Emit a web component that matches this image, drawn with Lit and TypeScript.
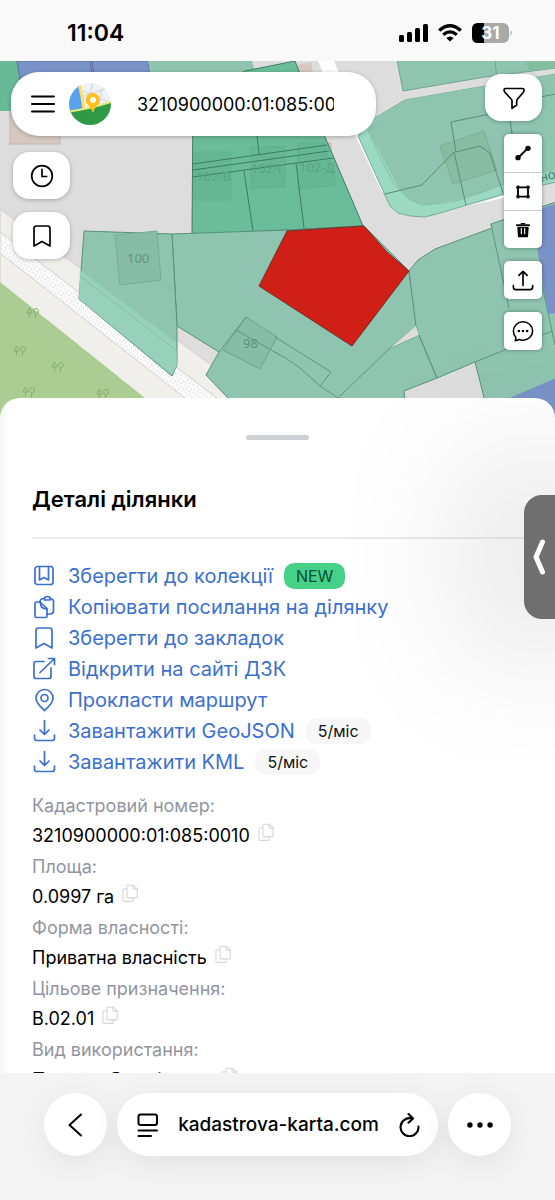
import { LitElement, html, css, svg, nothing } from "lit";
import { customElement } from "lit/decorators.js";

const icon = (body: unknown, cls: string, box = "0 0 24 24") => html`
  <svg class=${cls} viewBox=${box} fill="none" stroke="currentColor" stroke-linecap="round" stroke-linejoin="round" aria-hidden="true">${body}</svg>`;

const glyphs = {
  menu: svg`<g stroke-width="2"><path d="M1 4.500h22M1 12h22M1 19.500h22"/></g>`,
  clock: svg`<g stroke-width="1.700"><circle cx="12" cy="12" r="10.300"/><path d="M12 5.500V12.500h4.500" stroke-linecap="square" stroke-linejoin="miter"/></g>`,
  bookmark: svg`<path stroke-width="1.700" d="M4 22V4.500Q4 2 6.500 2h11Q20 2 20 4.500V22l-8-4.500z"/>`,
  filter: svg`<path stroke-width="1.700" d="M3.500 2.500h17q1.500 0 1.500 1.500 0 1.800-1.200 3L15.500 13q-.8.900-.8 2v4L10 22.300V15q0-1.100-.8-2L3.500 7Q2 5.500 2 4q0-1.500 1.500-1.500z"/>`,
  line: svg`<path stroke-width="3" d="M5 19L19 5"/><circle cx="4.500" cy="19" r="4" stroke="none" fill="currentColor"/><circle cx="19.500" cy="5" r="4" stroke="none" fill="currentColor"/>`,
  area: svg`<path stroke-width="2.800" d="M4.500 5h15v14h-15z"/><g fill="currentColor"><circle cx="4.500" cy="5" r="2.200"/><circle cx="19.500" cy="5" r="2.200"/><circle cx="4.500" cy="19" r="2.200"/><circle cx="19.500" cy="19" r="2.200"/></g>`,
  trash: svg`<path stroke-width="3" d="M3 5h18"/><path stroke-width="2" d="M9.500 2.500h5"/><path fill="currentColor" stroke-width="2" d="M4.500 8.500h15l-1 13.500h-13z"/><path stroke="#fff" stroke-width="1.700" d="M9.500 9.500v8M14.500 9.500v8"/>`,
  upload: svg`<g stroke-width="1.800"><path d="M12 18V2.500M7.500 7L12 2.500 16.500 7"/><path d="M1.500 18v1.500q0 3 3 3h15q3 0 3-3V18"/></g>`,
  chat: svg`<path stroke-width="1.700" d="M3.500 22.500c1-1.500 1-2.500.6-3.600C2.600 17.200 1.500 14.800 1.500 12 1.500 6.500 6.200 2 12 2s10.500 4.500 10.500 10-4.700 10-10.500 10c-1.500 0-3-.3-4.200-.8-1.200.8-2.600 1.300-4.300 1.300z"/><g fill="currentColor" stroke-width="0"><circle cx="7.500" cy="12" r="1.400"/><circle cx="12" cy="12" r="1.400"/><circle cx="16.500" cy="12" r="1.400"/></g>`,
  collection: svg`<g stroke-width="1.700"><rect x="3" y="2.500" width="18" height="18" rx="2.500"/><path d="M7.500 2.500v13.500l4.500-2.500 4.500 2.500v-13.500"/></g>`,
  clipboard: svg`<g stroke-width="1.700"><path d="M9 22.500H4.500Q3 22.500 3 21V8.500Q3 7 4.500 7H8l7 6.500V21q0 1.500-1.500 1.500z"/><path d="M8 7q.5 1 1 3.500Q9.500 13 12 13.300q2 .2 3 1"/><path d="M8 7Q8 4 11 3.500h1.500M18 3.500q3.500.3 3.500 3V16q0 3-3.500 3h-3"/><path d="M12.500 2.500q2.700-2 5.500 0v2.500h-5.500z"/></g>`,
  external: svg`<g stroke-width="1.700"><path d="M12 4.500H4Q2 4.500 2 6.500v13q0 2 2 2h13q2 0 2-2V11"/><path d="M8 15.500L22.500 1.500M16.500 1.500h6v6"/></g>`,
  pin: svg`<g stroke-width="1.700"><path d="M12.500 22.500C9 19.500 4 15 4 10a8.500 8.500 0 0 1 17 0c0 5-5 9.500-8.500 12.500z"/><circle cx="12.500" cy="10" r="3.500"/></g>`,
  download: svg`<g stroke-width="1.700"><path d="M12.500 1.500v14M8 11l4.500 4.500L17 11"/><path d="M2.500 16v3q0 2.500 2.500 2.500h15q2.500 0 2.500-2.500v-3"/></g>`,
  back: svg`<path stroke-width="2" d="M17 1.500L5.500 12l11.500 10.500"/>`,
  page: svg`<g stroke-width="2"><rect x="2.500" y="1.500" width="18.500" height="10.500" rx="2"/><path d="M2.500 17.500h18.500M2.500 23h12.500"/></g>`,
  reload: svg`<g stroke-width="2.100"><path d="M14 5.300A9 9 0 1 0 21.500 13.500"/><path d="M11.500 1l4.500 4.500-4.500 4.200"/></g>`,
  more: svg`<g fill="currentColor" stroke="none"><circle cx="2.700" cy="12" r="2.500"/><circle cx="12" cy="12" r="2.500"/><circle cx="21.300" cy="12" r="2.500"/></g>`,
  copy: svg`<g stroke-width="1.400"><path d="M9 1.500h6.500l5 4.500v10q0 1.500-1.500 1.500H9q-1.500 0-1.500-1.500V3Q7.500 1.500 9 1.500z"/><path d="M15 1.500V5.500q0 1 1 1h4.500"/><path d="M7.500 6H4Q2.500 6 2.500 7.500V20.500Q2.500 22 4 22h10q1.500 0 1.500-1.500v-3"/></g>`,
};

type Action = { glyph: unknown; text: string; href?: string; badge?: string; fresh?: boolean };

const actions: Action[] = [
  { glyph: glyphs.collection, text: "Зберегти до колекції", badge: "NEW", fresh: true },
  { glyph: glyphs.clipboard, text: "Копіювати посилання на ділянку" },
  { glyph: glyphs.bookmark, text: "Зберегти до закладок" },
  { glyph: glyphs.external, text: "Відкрити на сайті ДЗК", href: "#dzk" },
  { glyph: glyphs.pin, text: "Прокласти маршрут", href: "#route" },
  { glyph: glyphs.download, text: "Завантажити GeoJSON", badge: "5/міс" },
  { glyph: glyphs.download, text: "Завантажити KML", badge: "5/міс" },
];

const details: [string, string][] = [
  ["Кадастровий номер:", "3210900000:01:085:0010"],
  ["Площа:", "0.0997 га"],
  ["Форма власності:", "Приватна власність"],
  ["Цільове призначення:", "B.02.01"],
  ["Вид використання:", "Присадибна ділянка"],
];

@customElement("parcel-map")
export class ParcelMap extends LitElement {
  static styles = css`
    :host { display: block; }
    .canvas { display: block; width: 100%; height: 100%; }
    .number { font-family: "Noto Sans", sans-serif; font-size: 13px; fill: #5d9583; }
    .faint { fill: #57a586; }
    .street { font-family: "Noto Sans", sans-serif; font-size: 13px; fill: #4d7a6c; }
  `;

  render() {
    const tree = (x: number, y: number) => svg`
      <g transform="translate(${x} ${y})" fill="none" stroke="#86ab70" stroke-width="1">
        <path d="M0 5L2.500 0 5 5zM2.500 5v4M6.500 3a2.500 2.500 0 1 1 4 2l-2 1.500zM8.500 6v4"/>
      </g>`;
    return html`
      <svg class="canvas" viewBox="0 61 555 360" preserveAspectRatio="xMidYMin slice" role="img" aria-label="Карта ділянок">
        <defs>
          <pattern id="gravel" width="8" height="8" patternUnits="userSpaceOnUse">
            <rect width="8" height="8" fill="#fbfbfb"/>
            <path d="M1 1h1M5 2h1M3 4h1M7 5h1M1 6h1M5 7h1" stroke="#cfcfcf" stroke-width="1"/>
          </pattern>
        </defs>
        <rect y="61" width="555" height="360" fill="#dedddd"/>

        <polygon points="0,209 265,405 265,421 0,421" fill="#f1efeb" stroke="#d2cdca"/>
        <polygon points="0,232 222,402 190,402 0,253" fill="url(#gravel)" stroke="#d8cfcb"/>
        <polygon points="0,282 145,398 175,421 0,421" fill="#abcd93"/>
        ${tree(27, 308)}${tree(14, 346)}${tree(52, 362)}${tree(23, 387)}${tree(97, 389)}

        <rect x="10" y="111" width="50" height="33" fill="#d5c9c1" stroke="#c4b4ac"/>
        <polygon points="0,61 17,61 25,111 0,111" fill="#67b997"/>
        <polygon points="17,61 148,61 155,111 25,111" fill="#7992c8" stroke="#5a6f9d"/>
        <path d="M90 61l4 30M92 61l4 30" stroke="#5a6f9d" fill="none"/>
        <polygon points="148,61 252,61 262,100 155,100" fill="#8fc5b0"/>
        <polygon points="297,65 311,62 314,80 300,80" fill="#d9c8c0"/>
        <polygon points="318,61 334,61 352,104 336,104" fill="#fff"/>
        <path d="M356 134l27 58" stroke="#fff" stroke-width="2"/>
        <path d="M315 143h16v15h-10z" fill="#d9c4bd" stroke="#d0aaa2"/>

        <g fill="#6bbc9a" stroke="#3b7d65" stroke-width="1">
          <polygon points="193,100 245,71 295,61 325,137 352,200 363,226 192,235"/>
          <g fill="#65b693" stroke="#60b08d"><path d="M194 152h37v48h-37zM251 148l34-2v41l-34 1zM298 143h26l12 42-38 4z"/></g>
          <path fill="none" d="M193 164L327 145M193 170L329 151M193 177L333 158M244 171l9 60M296 163l8 65M257 136l2 18"/>
        </g>
        <text class="number faint" x="196" y="181">102-В</text>
        <text class="number faint" x="251" y="173">102-Г</text>
        <text class="number faint" x="299" y="172">102-Д</text>

        <g fill="#8fc5b0" stroke="#6fa693" stroke-width="1">
          <polygon points="397,60 556,60 556,68 485,77 403,91"/>
          <path d="M495 60l2 20" fill="none"/>
        </g>
        <polygon points="462,207 485,201 504,195 504,198" fill="#fff"/>
        <polygon points="358,136 375,118 405,100 485,86 556,74 556,182 504,194 440,213 425,217 410,216 398,213 390,206 384,193" fill="#9bd9c3" stroke="#74ad99"/>
        <polygon points="368,130 378,118 405,100 485,86 556,74 556,170 504,184 485,192 460,199 425,205 410,200 398,187" fill="#8fc5b0"/>
        <path d="M368 130q10 25 25 52 15 20 30 23 18-1 37-5 22-8 44-16" fill="none" stroke="#85bda6"/>
        <polygon points="440,146 484,131 497,170 453,184" fill="#88bba2" stroke="#7bb095"/>
        <path d="M490 114l-39 8 5 30 24-6 10 7 13 40M454 152l12 53M454 152l-32 33-37 9M510 120l3 20M540 97l16-3" fill="none" stroke="#5a8c7b"/>
        <polygon points="525,61 555,61 555,68 530,71" fill="#85bd9f"/>
        <text class="street" x="541" y="182" transform="rotate(-14 541 182)">но</text>

        <g fill="#8fc5b0" stroke="#56907c" stroke-width="1">
          <polygon points="172,234 288,230 364,226 409,271 417,326 390,348 419,335 437,378 404,391 407,421 250,421 206,375 219,352 177,326"/>
          <polygon points="409,271 418,260 435,249 492,228 491,224 556,202 556,421 490,421 475,362 437,378 419,335 416,326"/>
          <polygon points="84,231 172,234 177,326 177,365 172,376 79,299"/>
        </g>
        <polygon points="80,270 176,342 177,365 172,375 79,299" fill="#98d1bb"/>
        <path d="M80 276l97 75" stroke="#88bfa9" fill="none"/>
        <polygon points="115,235 157,231 161,280 120,285" fill="#87bca6" stroke="#79ac97"/>
        <polygon points="246,317 277,337 260,369 223,350" fill="#87bca6" stroke="#6fa28e"/>
        <path d="M219 352l27-35M236 330l44 25M275 337l56 35-11 14-20-18q-10-8-25-16M320 386l18 12 52-50M491 224l18 84M475 362l77-31M541 280l14 65" fill="none" stroke="#5f9581"/>
        <polygon points="390,348 416,326 419,335" fill="#dedddd"/>
        <text class="number" x="127" y="263">100</text>
        <text class="number" x="243" y="348">98</text>
        <polygon points="531,211 556,204 556,313 548,314" fill="#7992c8"/>
        <polygon points="505,400 556,378 556,421 505,421" fill="#7992c8"/>
        <polygon points="287,231 364,226 387,252 409,271 352,346 259,286" fill="#d01f17" stroke="#6d332a" stroke-width="1"/>
      </svg>`;
  }
}

@customElement("app-root")
export class AppRoot extends LitElement {
  static styles = css`
    :host {
      display: flex;
      flex-direction: column;
      height: 100vh;
      overflow: hidden;
      background: #f4f4f4;
      color: #000;
      font-family: Inter, "Noto Sans", sans-serif;
      font-size: 18px;
    }
    * { box-sizing: border-box; }
    button, input { font: inherit; color: inherit; border: 0; margin: 0; padding: 0; background: none; }
    button { cursor: pointer; }
    svg { display: block; flex: none; }

    .status {
      display: flex;
      align-items: center;
      justify-content: space-between;
      flex: none;
      height: 61px;
      padding: 4px 42px 0 67px;
      background: #f9f9f9;
    }
    .time { font-size: 23px; font-weight: 600; line-height: 28px; }
    .signals { display: flex; align-items: center; gap: 10px; }
    .bars { width: 29px; height: 18px; }
    .wifi { width: 24px; height: 18px; }
    .battery { width: 41px; height: 20px; }
    .charge { font-family: Inter, sans-serif; font-size: 17px; font-weight: 700; fill: #fff; }

    .page { position: relative; display: flex; flex-direction: column; flex: 1; min-height: 0; overflow: hidden; background: #fff; }
    .map-area { display: grid; flex: none; height: 360px; }
    .map, .controls { grid-area: 1 / 1; min-height: 0; min-width: 0; }
    .map { height: 360px; }
    .controls { display: flex; justify-content: space-between; align-items: flex-start; padding: 11px 13px 0 11px; z-index: 1; }
    .left { display: flex; flex-direction: column; align-items: flex-start; gap: 13px; flex: 0 1 365px; min-width: 0; }
    .right { display: flex; flex-direction: column; align-items: flex-end; gap: 13px; padding-top: 2px; }
    .search {
      display: flex;
      align-items: center;
      width: 100%;
      height: 64px;
      margin-bottom: 3px;
      padding: 0 42px 0 20px;
      border-radius: 28px;
      background: #fff;
      box-shadow: 0 1px 4px rgba(0, 0, 0, .25);
    }
    .menu { margin-right: 14px; }
    .logo { width: 42px; height: 42px; margin-right: 26px; }
    .query { flex: 1; min-width: 0; height: 32px; outline: none; }
    .pill {
      display: grid;
      place-items: center;
      width: 57px;
      height: 47px;
      margin-left: 2px;
      border-radius: 16px;
      background: #fff;
      box-shadow: 0 1px 4px rgba(0, 0, 0, .25);
    }
    .tools { display: flex; flex-direction: column; border-radius: 5px; background: #fff; box-shadow: 0 0 4px rgba(0, 0, 0, .35); }
    .tool { display: grid; place-items: center; width: 38px; height: 38px; }
    .tool + .tool { border-top: 1px solid #ccc; }
    .i18 { width: 16px; height: 16px; }
    .i22 { width: 22px; height: 22px; }
    .i24 { width: 24px; height: 24px; }

    .sheet {
      position: relative;
      flex: 1;
      min-height: 0;
      margin-top: -23px;
      padding: 37px 32px 0;
      overflow: hidden;
      border-radius: 20px 20px 0 0;
      background: linear-gradient(90deg, #f5f5f5, #fff 8px);
      z-index: 2;
    }
    .handle { width: 63px; height: 5px; margin: 0 auto; border-radius: 3px; background: #cfcfd6; }
    .title { margin: 45px 0 0; font-size: 22px; font-weight: 600; line-height: 28px; }
    .rule { height: 2px; margin: 24px -32px 21px 0; border: 0; background: #ebebeb; }
    .actions { list-style: none; margin: 0; padding: 0; color: #3b70cf; font-size: 20px; }
    .row { display: flex; align-items: center; gap: 11px; height: 31px; }
    .action { display: flex; align-items: center; gap: 12px; color: inherit; text-decoration: none; white-space: nowrap; }
    .badge { padding: 0 12px; border-radius: 10px; background: #f7f7f7; color: #111; font-size: 16px; line-height: 26px; }
    .badge.fresh { background: #47d088; color: #075033; }
    .details { margin: 14px 0 0; }
    .details dt { color: #92959f; line-height: 30px; }
    .details dd { display: flex; align-items: center; gap: 7px; height: 29px; margin: 0 0 2px; white-space: nowrap; }
    .copy { color: #d6d6da; padding-bottom: 6px; }
    .i20 { width: 19px; height: 19px; }

    .drawer {
      position: absolute;
      top: 434px;
      right: 0;
      display: grid;
      place-items: center;
      width: 31px;
      height: 124px;
      border-radius: 18px 0 0 18px;
      background: #6f6f6f;
      color: #fff;
      box-shadow: 0 0 160px 10px rgba(0, 0, 0, .42);
      z-index: 3;
    }
    .chevron { width: 14px; height: 36px; }

    .browser {
      display: flex;
      align-items: center;
      gap: 10px;
      flex: none;
      padding: 20px 44px 44px;
      background: #f4f4f4;
    }
    .round, .address { height: 63px; border-radius: 32px; background: #fff; box-shadow: 0 8px 32px rgba(0, 0, 0, .08); }
    .round { display: grid; place-items: center; flex: none; width: 63px; }
    .address { display: flex; align-items: center; justify-content: space-between; flex: 1; min-width: 0; padding: 0 17px 0 19px; }
    .host { font-size: 19px; font-weight: 500; white-space: nowrap; }
    .i26 { width: 26px; height: 26px; }
  `;

  render() {
    return html`
      <header class="status">
        <span class="time">11:04</span>
        <div class="signals">
          <svg class="bars" viewBox="0 0 29 18" aria-hidden="true"><rect y="11" width="5" height="7" rx="1.500"/><rect x="8" y="8" width="5" height="10" rx="1.500"/><rect x="16" y="4" width="5" height="14" rx="1.500"/><rect x="24" width="5" height="18" rx="1.500"/></svg>
          <svg class="wifi" viewBox="0 0 24 18" fill="none" stroke="#000" stroke-width="3.200" aria-hidden="true"><path d="M1.200 6.500Q12-3 22.800 6.500M5.200 10.800q6.800-5.800 13.600 0"/><path d="M8.300 14q3.700-3 7.400 0L12 17.600z" fill="#000" stroke="none"/></svg>
          <svg class="battery" viewBox="0 0 41 20" role="img" aria-label="31%">
            <rect width="37" height="20" rx="6" fill="#a9a9a9"/><path d="M12 0H6Q0 0 0 6v8q0 6 6 6h6z"/><path d="M38.500 7q2.500 3 0 6z" fill="#a9a9a9"/>
            <text class="charge" x="18.500" y="16" text-anchor="middle">31</text>
          </svg>
        </div>
      </header>

      <main class="page">
        <section class="map-area">
          <parcel-map class="map"></parcel-map>
          <div class="controls">
            <div class="left">
              <div class="search">
                <button class="menu" aria-label="Меню">${icon(glyphs.menu, "i24")}</button>
                <svg class="logo" viewBox="0 0 42 42" aria-hidden="true">
                  <defs><clipPath id="disc"><circle cx="21" cy="21" r="21"/></clipPath></defs>
                  <g clip-path="url(#disc)">
                    <rect width="42" height="42" fill="#f1f2f5"/>
                    <path d="M14 8l28 12M24 0L18 20M34 0l-5 30M12 14L42 4" stroke="#dadce3" stroke-width="1.500"/>
                    <path d="M0 0h11l5 26L0 30z" fill="#5aa2ee"/>
                    <path d="M10 0q3 12 5 26" stroke="#ffdf63" stroke-width="3" fill="none"/>
                    <path d="M0 29q20-4 42-10v23H0z" fill="#2e9a46"/>
                    <path d="M0 28.500q22-3 42-9.500" stroke="#e7ec7b" stroke-width="2" fill="none"/>
                    <path d="M24 30q-1-3-4.500-7.500A7 7 0 1 1 28.500 22Q25 26 24 30z" fill="#fdbf18"/>
                    <circle cx="24" cy="17" r="3" fill="#fff"/>
                  </g>
                </svg>
                <input class="query" type="text" aria-label="Кадастровий номер" .value=${"3210900000:01:085:0010"} />
              </div>
              <button class="pill" aria-label="Історія">${icon(glyphs.clock, "i24")}</button>
              <button class="pill" aria-label="Закладки">${icon(glyphs.bookmark, "i24")}</button>
            </div>
            <div class="right">
              <button class="pill" aria-label="Фільтр">${icon(glyphs.filter, "i24")}</button>
              <div class="tools">
                <button class="tool" aria-label="Виміряти відстань">${icon(glyphs.line, "i18")}</button>
                <button class="tool" aria-label="Виміряти площу">${icon(glyphs.area, "i18")}</button>
                <button class="tool" aria-label="Видалити">${icon(glyphs.trash, "i18")}</button>
              </div>
              <div class="tools"><button class="tool" aria-label="Завантажити файл">${icon(glyphs.upload, "i22")}</button></div>
              <div class="tools"><button class="tool" aria-label="Чат">${icon(glyphs.chat, "i22")}</button></div>
            </div>
          </div>
        </section>

        <section class="sheet">
          <div class="handle"></div>
          <h1 class="title">Деталі ділянки</h1>
          <hr class="rule" />
          <ul class="actions">
            ${actions.map((a) => html`
              <li class="row">
                ${a.href
                  ? html`<a class="action" href=${a.href}>${icon(a.glyph, "i24")}<span>${a.text}</span></a>`
                  : html`<button class="action">${icon(a.glyph, "i24")}<span>${a.text}</span></button>`}
                ${a.badge ? html`<span class="badge ${a.fresh ? "fresh" : ""}">${a.badge}</span>` : nothing}
              </li>`)}
          </ul>
          <dl class="details">
            ${details.map(([name, value]) => html`
              <dt>${name}</dt>
              <dd>${value}<button class="copy" aria-label="Копіювати">${icon(glyphs.copy, "i20")}</button></dd>`)}
          </dl>
        </section>

        <button class="drawer" aria-label="Відкрити панель">
          <svg class="chevron" viewBox="0 0 14 36" fill="none" stroke="currentColor" stroke-width="5" stroke-linecap="round" stroke-linejoin="round" aria-hidden="true"><path d="M9.500 3L3 18l6.500 15"/></svg>
        </button>
      </main>

      <nav class="browser">
        <button class="round" aria-label="Назад">${icon(glyphs.back, "i24")}</button>
        <div class="address">
          ${icon(glyphs.page, "i24")}
          <span class="host">kadastrova-karta.com</span>
          <button aria-label="Оновити">${icon(glyphs.reload, "i24")}</button>
        </div>
        <button class="round" aria-label="Більше">${icon(glyphs.more, "i26")}</button>
      </nav>`;
  }
}
